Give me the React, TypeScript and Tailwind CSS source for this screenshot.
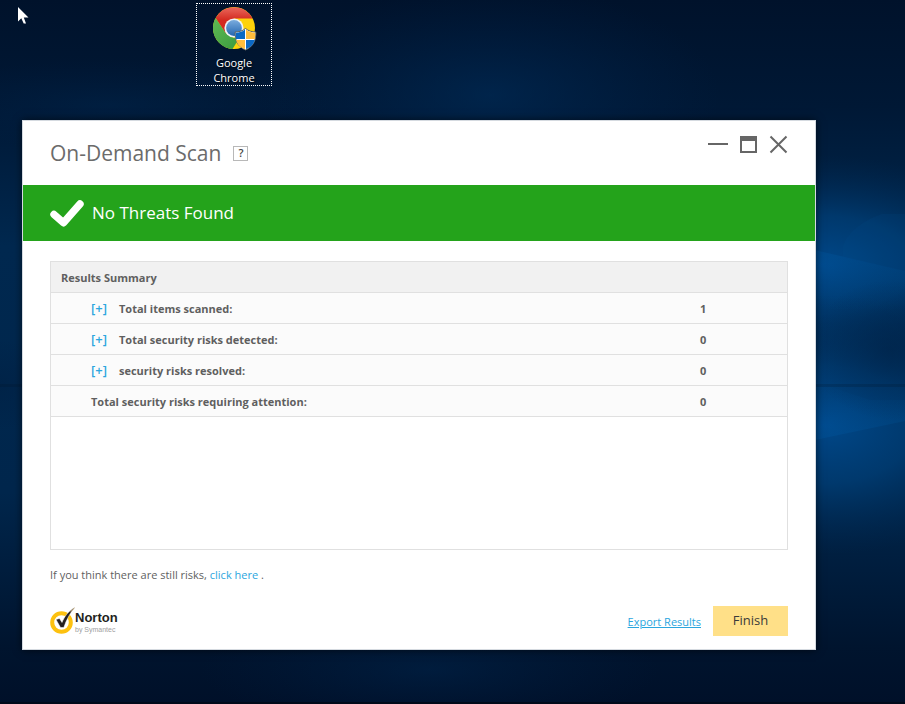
import { useState } from 'react';

const summaryRows = [
  { label: 'Total items scanned:', count: 1, expandable: true },
  { label: 'Total security risks detected:', count: 0, expandable: true },
  { label: 'security risks resolved:', count: 0, expandable: true },
  { label: 'Total security risks requiring attention:', count: 0, expandable: false },
];

function Wallpaper() {
  return (
    <svg className="absolute inset-0 h-full w-full" viewBox="0 0 905 704" preserveAspectRatio="none" aria-hidden="true">
      <defs>
        <linearGradient id="base" x1="0" y1="0" x2="0" y2="1">
          <stop offset="0" stopColor="#00122b" />
          <stop offset="0.15" stopColor="#001835" />
          <stop offset="0.35" stopColor="#00284f" />
          <stop offset="0.7" stopColor="#00264c" />
          <stop offset="0.92" stopColor="#00142e" />
          <stop offset="1" stopColor="#001029" />
        </linearGradient>
        <radialGradient id="glow">
          <stop offset="0" stopColor="#00488a" />
          <stop offset="0.45" stopColor="#003f78" stopOpacity="0.75" />
          <stop offset="1" stopColor="#002a55" stopOpacity="0" />
        </radialGradient>
        <radialGradient id="haze">
          <stop offset="0" stopColor="#003060" stopOpacity="0.65" />
          <stop offset="1" stopColor="#002550" stopOpacity="0" />
        </radialGradient>
        <radialGradient id="shade">
          <stop offset="0" stopColor="#001f42" stopOpacity="0.5" />
          <stop offset="1" stopColor="#001f42" stopOpacity="0" />
        </radialGradient>
        <linearGradient id="beamDown" x1="0" y1="0" x2="0" y2="1">
          <stop offset="0" stopColor="#0062b0" stopOpacity="0.22" />
          <stop offset="1" stopColor="#0062b0" stopOpacity="0" />
        </linearGradient>
        <linearGradient id="beamUp" x1="0" y1="1" x2="0" y2="0">
          <stop offset="0" stopColor="#0062b0" stopOpacity="0.22" />
          <stop offset="1" stopColor="#0062b0" stopOpacity="0" />
        </linearGradient>
      </defs>
      <rect width="905" height="704" fill="url(#base)" />
      <ellipse cx="490" cy="95" rx="230" ry="110" fill="url(#haze)" opacity="0.8" />
      <ellipse cx="110" cy="105" rx="220" ry="45" fill="url(#haze)" opacity="0.4" />
      <ellipse cx="0" cy="385" rx="50" ry="45" fill="url(#shade)" />
      <ellipse cx="820" cy="265" rx="200" ry="110" fill="url(#glow)" />
      <ellipse cx="825" cy="425" rx="200" ry="130" fill="url(#glow)" />
      <ellipse cx="430" cy="670" rx="230" ry="60" fill="url(#haze)" opacity="0.5" />
      <path d="M810 249L905 271V310H810Z" fill="url(#beamDown)" />
      <path d="M810 380L870 400L905 400V421L810 441Z" fill="url(#beamUp)" />
      <path d="M843 246C848 232 864 220 882 214H905V271L843 257Z" fill="#005090" opacity="0.12" />
      <ellipse cx="890" cy="350" rx="80" ry="70" fill="url(#shade)" />
      <path d="M0 384H905V387H0Z" fill="#001428" opacity="0.2" />
      <path d="M0 702H905V704H0Z" fill="#000a1a" />
    </svg>
  );
}

function ChromeIcon() {
  return (
    <svg className="h-[46px] w-[46px]" viewBox="0 0 46 46" aria-hidden="true">
      <defs>
        <linearGradient id="chromeRed" x1="0" y1="0" x2="0" y2="1">
          <stop offset="0" stopColor="#e9685c" />
          <stop offset="0.5" stopColor="#d42a20" />
        </linearGradient>
        <linearGradient id="chromeBlue" x1="0" y1="0" x2="0" y2="1">
          <stop offset="0" stopColor="#79abdd" />
          <stop offset="1" stopColor="#2566b0" />
        </linearGradient>
        <linearGradient id="chromeGreen" x1="0" y1="0" x2="1" y2="1">
          <stop offset="0" stopColor="#5fbb54" />
          <stop offset="1" stopColor="#38983d" />
        </linearGradient>
      </defs>
      <circle cx="23" cy="23" r="21" fill="#fdd20a" />
      <path d="M23 23L14.500 28L4.600 12.900A21 21 0 0 1 41.600 13.500H23Z" fill="url(#chromeRed)" />
      <path d="M4.600 12.900L14.600 28L23 33L31.500 28L21.500 44A21 21 0 0 1 4.600 12.900Z" fill="url(#chromeGreen)" />
      <circle cx="23" cy="23" r="9.600" fill="#eef3f7" />
      <circle cx="23" cy="23" r="7.900" fill="url(#chromeBlue)" />
      <path d="M34.500 23.500C37.500 26 41 27 44.800 27C45 35 43 41 34.500 45C26 41 24 35 24.200 27C28 27 31.500 26 34.500 23.500Z" fill="#fff" stroke="#5d625f" strokeWidth="1" />
      <path d="M34 24.500V34H25C24.700 32 24.700 30 24.800 27.700C28.500 27.500 31.500 26.700 34 24.500Z" fill="#0b68c4" />
      <path d="M35 24.500C37.500 26.700 40.500 27.500 44.200 27.700C44.300 30 44.200 32 43.900 34H35Z" fill="#ffbd3c" />
      <path d="M25.200 35H34V44.200C29 42 26.300 39.500 25.200 35Z" fill="#ffbd3c" />
      <path d="M35 35H43.700C42.600 39.500 40 42 35 44.200Z" fill="#0b68c4" />
    </svg>
  );
}

function NortonMark() {
  return (
    <svg className="h-[28px] w-[25px]" viewBox="0 0 25 28" aria-hidden="true">
      <circle cx="11.500" cy="15.500" r="9.300" fill="none" stroke="#fdc10f" strokeWidth="4" />
      <path d="M6 12.500L9.500 11.500L12 15.500C14.500 9.500 18 4.500 24.500 0.500C20 6.500 16.500 12.500 13.800 20.500H10.500Z" fill="#231f20" stroke="#fff" strokeWidth="0.500" />
      <path d="M20.500 4.500L24.500 1" stroke="#b59a6a" strokeWidth="1" />
    </svg>
  );
}

export default function App() {
  const [expanded, setExpanded] = useState<string | null>(null);

  return (
    <div className="relative min-h-screen overflow-hidden bg-[#00142e] font-['Open_Sans','Noto_Sans',sans-serif]">
      <Wallpaper />

      <svg className="absolute top-[7px] left-[18px] h-[17px] w-[11px]" viewBox="0 0 11 17" aria-hidden="true">
        <path d="M0 0V14.500L3.300 11.300L5.700 16.500H8L5.800 10.500H10.500Z" fill="#fff" />
      </svg>

      <button className="absolute top-[3px] left-[196px] flex h-[83px] w-[76px] flex-col items-center border border-dotted border-white pt-px text-[11px] leading-[15px] text-white [text-shadow:1px_1px_2px_#000]">
        <ChromeIcon />
        <span className="mt-1 block">Google<br />Chrome</span>
      </button>

      <main className="relative mt-[120px] mr-[89px] mb-[54px] ml-[22px] border border-[#d5dae0] bg-white text-[#5f5f5f] shadow-[0_0_8px_rgba(0,0,0,0.6)]">
        <header className="flex h-16 items-start justify-between px-[27px]">
          <div className="flex h-16 items-center gap-3">
            <h1 className="text-[21px] leading-8 text-[#6b6b6b]">On-Demand Scan</h1>
            <button aria-label="Help" className="flex h-[15px] w-[15px] items-center justify-center border border-[#b8b8b8] text-[11px] leading-3 font-semibold text-[#444]">?</button>
          </div>
          <div className="flex gap-3 pt-[13px]">
            <button aria-label="Minimize">
              <svg className="h-5 w-5" viewBox="0 0 20 20"><path d="M0 9H20V11H0Z" fill="#666" /></svg>
            </button>
            <button aria-label="Maximize">
              <svg className="h-5 w-[17px]" viewBox="0 0 17 20"><path d="M0 2H17V19H0ZM2 7V17H15V7Z" fill="#666" fillRule="evenodd" /></svg>
            </button>
            <button aria-label="Close">
              <svg className="h-5 w-[19px]" viewBox="0 0 19 20"><path d="M1.500 2.500L17.500 18.500M17.500 2.500L1.500 18.500" stroke="#666" strokeWidth="2" /></svg>
            </button>
          </div>
        </header>

        <div className="flex h-14 items-center gap-2 bg-[#24a31b] px-[27px] text-white">
          <svg className="h-[27px] w-[34px]" viewBox="0 0 34 27" aria-hidden="true">
            <path d="M4 14.500L13.500 22.800L30 4" fill="none" stroke="#fff" strokeWidth="7.400" strokeLinecap="round" strokeLinejoin="round" />
          </svg>
          <h2 className="text-[17px] leading-6">No Threats Found</h2>
        </div>

        <div className="px-[27px] pt-5 pb-[13px]">
          <div className="min-h-[289px] border border-[#e0e0e0]">
            <table className="w-full border-collapse text-left text-[11px] leading-4 font-bold">
              <thead>
                <tr className="h-[30px] border-b border-[#e0e0e0] bg-[#f1f1f1]">
                  <th colSpan={2} className="p-0 pt-0.5 pl-[10px]">Results Summary</th>
                </tr>
              </thead>
              <tbody>
                {summaryRows.map((row) => (
                  <tr key={row.label} className="h-[31px] border-b border-[#e0e0e0] bg-[#fbfbfb]">
                    <td className="p-0 pt-0.5 pl-10">
                      {row.expandable && (
                        <button
                          aria-label={`Expand ${row.label}`}
                          aria-expanded={expanded === row.label}
                          onClick={() => setExpanded(expanded === row.label ? null : row.label)}
                          className="w-7 text-left text-[13px] leading-4 font-semibold text-[#2ba6de]"
                        >
                          [+]
                        </button>
                      )}
                      {row.label}
                    </td>
                    <td className="w-[87px] p-0 pt-0.5">{row.count}</td>
                  </tr>
                ))}
              </tbody>
            </table>
          </div>

          <p className="mt-4 text-[11px] leading-[18px]">
            If you think there are still risks, <a href="#" className="text-[#2ba6de]">click here</a> .
          </p>

          <footer className="mt-[22px] flex items-center justify-between">
            <div className="flex items-center">
              <NortonMark />
              <div className="flex flex-col pt-0.5 font-['Liberation_Sans',sans-serif]">
                <span className="text-[13px] leading-[15px] font-bold text-[#231f20]">Norton</span>
                <span className="text-[7px] leading-[9px] text-[#a0a0a0]">by Symantec</span>
              </div>
            </div>
            <div className="flex items-center gap-3">
              <a href="#" className="pt-0.5 text-[11px] leading-4 text-[#2ba6de] underline">Export Results</a>
              <button className="h-[30px] w-[75px] bg-[#ffe088] text-[13px] text-[#3a3a3a]">Finish</button>
            </div>
          </footer>
        </div>
      </main>
    </div>
  );
}
